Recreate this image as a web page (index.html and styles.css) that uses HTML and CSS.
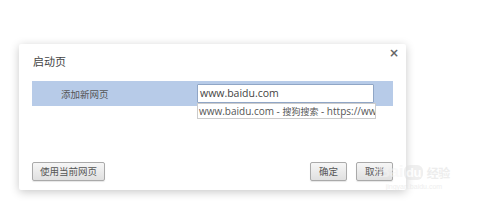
FILE: index.html
```html
<!DOCTYPE html>
<html lang="zh">
<head>
<meta charset="utf-8">
<link rel="stylesheet" href="styles.css">
</head>
<body>
<div class="dialog">
  <div class="head">
    <span class="title">启动页</span>
    <span class="close">×</span>
  </div>
  <div class="row">
    <span class="label">添加新网页</span>
    <div class="field">
      <div class="input">www.baidu.com</div>
      <div class="suggest">www.baidu.com - <span class="cjk">搜狗搜索</span> - https://www.sogou.com</div>
    </div>
  </div>
  <div class="foot">
    <button class="btn wide">使用当前网页</button>
    <div class="actions">
      <button class="btn">确定</button>
      <button class="btn">取消</button>
    </div>
  </div>
</div>
<div class="mark">
  <span class="mark-logo">Bai<b class="du">du</b><span class="jy">经验</span></span>
  <span class="mark-url">jingyan.baidu.com</span>
</div>
</body>
</html>
```
FILE: styles.css
```css
html, body {
  margin: 0;
  padding: 0;
  background: #fff;
  width: 480px;
  height: 207px;
  overflow: hidden;
  font-family: "Noto Sans CJK SC", "Noto Sans", sans-serif;
  color: #333;
}
body {
  padding: 44px 0 0 19px;
  box-sizing: border-box;
  position: relative;
}
.dialog {
  width: 387px;
  height: 146px;
  background: #fff;
  box-shadow: 0 2px 10px rgba(0,0,0,0.22);
  border-radius: 2px;
  box-sizing: border-box;
  padding: 0 13px 9px 13px;
  display: flex;
  flex-direction: column;
}
.head {
  display: flex;
  justify-content: space-between;
  align-items: flex-start;
  height: 37px;
  padding-left: 1px;
}
.title {
  font-size: 11px;
  color: #444;
  margin-top: 9px;
}
.close {
  font-family: "DejaVu Sans", sans-serif;
  font-size: 12px;
  font-weight: bold;
  color: #666;
  margin-top: 2px;
  margin-right: -6px;
}
.row {
  height: 25px;
  background: #b7cbe8;
  display: flex;
  align-items: flex-start;
}
.label {
  font-size: 9.5px;
  color: #555;
  margin: 6px 0 0 29px;
  width: 136px;
}
.field {
  position: relative;
  margin-top: 3px;
}
.input {
  width: 177px;
  height: 19px;
  box-sizing: border-box;
  border: 1px solid #90a6c6;
  border-radius: 1px;
  background: #fff;
  font-family: "Open Sans", sans-serif;
  font-size: 10.5px;
  color: #444;
  line-height: 17px;
  padding-left: 2px;
}
.suggest {
  position: absolute;
  left: 0;
  top: 19px;
  width: 179px;
  height: 16px;
  box-sizing: border-box;
  border: 1px solid #ccc;
  background: #fff;
  font-family: "Open Sans", sans-serif;
  font-size: 10px;
  color: #555;
  line-height: 14px;
  padding-left: 1px;
  white-space: nowrap;
  overflow: hidden;
}
.cjk {
  font-family: "Noto Sans CJK SC", sans-serif;
  font-size: 9px;
}
.foot {
  margin-top: auto;
  display: flex;
  justify-content: space-between;
  align-items: flex-end;
}
.actions {
  display: flex;
  gap: 9px;
}
.btn {
  height: 19px;
  width: 37px;
  padding: 0;
  white-space: nowrap;
  font-family: "Noto Sans CJK SC", sans-serif;
  font-size: 9.5px;
  color: #555;
  background: linear-gradient(#f6f6f6, #e0e0e0);
  border: 1px solid #aaa;
  border-radius: 2px;
  box-shadow: 0 1px 1px rgba(0,0,0,0.1);
  line-height: 17px;
}
.btn.wide { width: 73px; }
.mark {
  position: absolute;
  left: 378px;
  top: 162px;
  display: flex;
  flex-direction: column;
  align-items: center;
  opacity: 0.55;
}
.mark-logo {
  display: flex;
  align-items: center;
  font-family: "Liberation Sans", sans-serif;
  font-size: 17px;
  font-weight: bold;
  color: #f4f4f4;
  letter-spacing: -0.5px;
}
.du {
  background: #e2e2e2;
  color: #fff;
  border-radius: 6px;
  padding: 0 2px;
  font-size: 13px;
  margin-left: 1px;
}
.jy {
  font-family: "Noto Sans CJK SC", sans-serif;
  font-size: 12px;
  font-weight: bold;
  color: #e0e0e0;
  margin-left: 4px;
}
.mark-url {
  font-family: "Liberation Sans", sans-serif;
  font-size: 7px;
  color: #e2e2e2;
  margin-top: 1px;
}
```
